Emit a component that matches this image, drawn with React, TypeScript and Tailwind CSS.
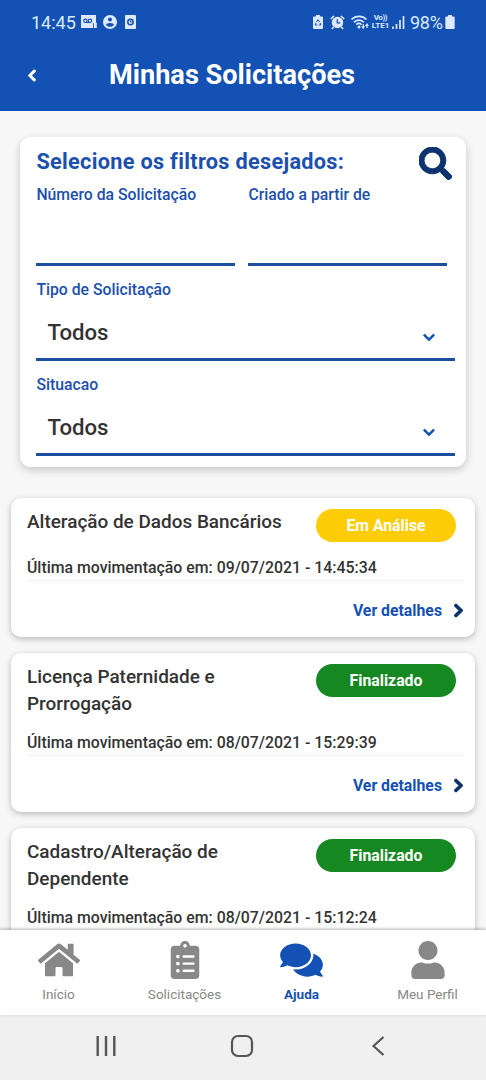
import {
  FaChevronDown,
  FaChevronLeft,
  FaChevronRight,
  FaClipboardList,
  FaComments,
  FaHome,
  FaSearch,
  FaUser,
} from 'react-icons/fa'
import clsx from 'clsx'

const requests = [
  {
    title: 'Alteração de Dados Bancários',
    status: 'Em Análise',
    updatedAt: '09/07/2021 - 14:45:34',
  },
  {
    title: 'Licença Paternidade e Prorrogação',
    status: 'Finalizado',
    updatedAt: '08/07/2021 - 15:29:39',
  },
  {
    title: 'Cadastro/Alteração de Dependente',
    status: 'Finalizado',
    updatedAt: '08/07/2021 - 15:12:24',
  },
]

function StatusBar() {
  return (
    <div className="flex h-[44px] items-center pr-[31px] pl-[31px] text-[#dce9ff]">
      <span className="w-[50px] text-[18px] whitespace-nowrap">14:45</span>
      {/* Voicemail */}
      <svg className="h-4 w-4" viewBox="0 0 16 16">
        <path d="M0 1h15v8h-3v5H0z" fill="currentColor" />
        <g fill="none" stroke="#1351b4" strokeWidth="1.1">
          <circle cx="4.4" cy="6.8" r="1.7" />
          <circle cx="9" cy="6.8" r="1.7" />
          <path d="M4.4 8.5H9" />
        </g>
        <rect x="12.8" y="8.6" width="3" height="5.4" fill="currentColor" />
      </svg>
      {/* Account */}
      <svg className="ml-[6px] h-[14px] w-[14px]" viewBox="0 0 14 14">
        <circle cx="7" cy="7" r="7" fill="currentColor" />
        <circle cx="7" cy="4.5" r="2" fill="#1351b4" />
        <path d="M3 10c0-2.8 8-2.8 8 0-2 2.4-6 2.4-8 0z" fill="#1351b4" />
      </svg>
      <svg className="ml-[8px] h-[14px] w-[11px]" viewBox="0 0 11 14">
        <rect width="11" height="14" rx="0.8" fill="currentColor" />
        <circle cx="5.5" cy="7" r="2.7" fill="none" stroke="#1351b4" strokeWidth="1.5" />
        <path d="M5.5 5.5V7H7" fill="none" stroke="#1351b4" />
      </svg>

      {/* Battery saver */}
      <svg className="ml-auto h-[14px] w-[10px]" viewBox="0 0 10 14">
        <path
          d="M3 0h4v1.5h2a1 1 0 0 1 1 1V13a1 1 0 0 1-1 1H1a1 1 0 0 1-1-1V2.5a1 1 0 0 1 1-1h2z"
          fill="currentColor"
        />
        <path
          d="M3.5 7 5 4.7 6.5 7M7 7.8l.8 2.2H5.8M4.3 10H2.2L3 7.8"
          fill="none"
          stroke="#1351b4"
        />
      </svg>
      {/* Alarm */}
      <svg className="ml-[7px] h-[15px] w-[15px]" viewBox="0 0 15 15">
        <circle cx="7.5" cy="7.5" r="5.7" fill="currentColor" />
        <path
          d="M.8 4 4 1M14.2 4 11 1M3.5 12 2 14M11.5 12l1.5 2"
          stroke="currentColor"
          strokeWidth="1.7"
        />
        <path d="M7.3 4.2v3.6h3" fill="none" stroke="#1351b4" strokeWidth="1.3" />
      </svg>
      {/* Wifi with traffic arrows */}
      <svg className="ml-[6px] h-[15px] w-[18px]" viewBox="0 0 18 15">
        <path
          d="M.5 4.5c4-4.3 11-4.3 15 0M3 7.3c3-3 7.3-3 10 0M5.3 9.7c1.6-1.5 3.6-1.5 5.2 0"
          fill="none"
          stroke="currentColor"
          strokeWidth="1.7"
        />
        <circle cx="8" cy="12" r="1.5" fill="currentColor" />
        <path
          d="M10.2 11.2h4l-2 3zM14 11l2-3 2 3zM11.6 9h1.2v3h-1.2zM15.4 10h1.2v3h-1.2z"
          fill="currentColor"
        />
      </svg>
      <div className="ml-[2px] flex w-[19px] flex-col items-center text-[8px] leading-[8px] font-bold whitespace-nowrap">
        <span className="tracking-[-0.4px]">Vo))</span>
        <span>LTE1</span>
      </div>
      <svg className="ml-[2px] h-[14px] w-[13px]" viewBox="0 0 13 14">
        <path
          d="M1 14v-2.5M4.5 14V9M8 14V5M11.5 14V1"
          stroke="currentColor"
          strokeWidth="1.7"
        />
      </svg>
      <span className="ml-[5px] w-[34px] text-[18px] tracking-[-0.3px] whitespace-nowrap">
        98%
      </span>
      <svg className="ml-px h-[14px] w-[10px]" viewBox="0 0 10 15">
        <path
          d="M3 0h4v1.5h2a1 1 0 0 1 1 1V14a1 1 0 0 1-1 1H1a1 1 0 0 1-1-1V2.5a1 1 0 0 1 1-1h2z"
          fill="currentColor"
        />
      </svg>
    </div>
  )
}

function TextField({ label }: { label: string }) {
  return (
    <div className="h-[81px] w-[199px] border-b-[3px] border-[#1c4f9f]">
      <div className="text-[15.75px] leading-5 font-medium text-[#1c50ad]">{label}</div>
    </div>
  )
}

function SelectField({ label, value }: { label: string; value: string }) {
  return (
    <div className="mt-[14px] h-[81px] border-b-[3px] border-[#1c4f9f]">
      <div className="text-[15.75px] leading-5 font-medium text-[#1c50ad]">{label}</div>
      <div className="mt-[18px] flex h-[30px] items-center justify-between pr-[19px] pl-[11px]">
        <span className="text-[22.2px] font-medium text-[#333]">{value}</span>
        <FaChevronDown strokeWidth={24} className="mt-[9px] h-[13px] w-[14px] text-[#1351b4]" />
      </div>
    </div>
  )
}

function RequestCard({ title, status, updatedAt }: (typeof requests)[number]) {
  const done = status === 'Finalizado'

  return (
    <div className="shrink-0 rounded-[10px] bg-white pt-[10px] pr-[11px] pl-4 shadow-[0_2px_6px_rgba(0,0,0,0.25)]">
      <div className="flex items-start justify-between pr-[8px]">
        <div className="w-[260px] text-[18.95px] leading-[27px] font-medium text-[#333]">
          <div className={clsx(done && 'w-[220px]')}>{title}</div>
        </div>
        <div
          className={clsx(
            'mt-px flex h-[33px] w-[140px] items-center justify-center rounded-full text-[15.8px] font-bold text-white',
            done ? 'bg-[#168821]' : 'bg-[#ffcd07]',
          )}
        >
          {status}
        </div>
      </div>
      <div className="mt-[16px] border-b border-dotted border-[#e8e8e8] pb-[2px] text-[15.85px] leading-5 font-medium whitespace-nowrap text-[#333]">
        Última movimentação em: {updatedAt}
      </div>
      <div className="flex h-[56px] items-center justify-end pt-[3px] text-[15.8px] font-bold text-[#1351b4]">
        Ver detalhes
        <FaChevronRight strokeWidth={40} className="ml-[11px] h-[15px] w-[11px] text-[#0c326f]" />
      </div>
    </div>
  )
}

const tabs = [
  { label: 'Início', icon: FaHome, size: 'w-[42px] h-[38px]', width: 'w-[117px]' },
  { label: 'Solicitações', icon: FaClipboardList, size: 'w-[38px] h-[38px]', width: 'w-[135px]' },
  { label: 'Ajuda', icon: FaComments, size: 'w-[43px] h-[38px]', width: 'w-[99px]', active: true },
  { label: 'Meu Perfil', icon: FaUser, size: 'w-[38px] h-[38px]', width: 'ml-[18px] w-[117px]' },
]

function TabBar() {
  return (
    <nav className="relative flex h-[85px] shrink-0 bg-white shadow-[0_-1px_3px_rgba(0,0,0,0.3)]">
      {tabs.map(({ label, icon: Icon, size, width, active }) => (
        <div
          key={label}
          className={clsx(
            'flex shrink-0 flex-col items-center pt-[11px] text-[13.5px]',
            width,
            active ? 'font-bold text-[#1351b4]' : 'text-[#888]',
          )}
        >
          <Icon className={size} />
          <span className="mt-[5px] leading-5 whitespace-nowrap">{label}</span>
        </div>
      ))}
    </nav>
  )
}

function SystemBar() {
  return (
    <div className="flex h-[65px] shrink-0 items-center bg-[#f0f0f0] pb-[3px] pl-[95px] text-[#555]">
      <svg
        className="h-[22px] w-[22px]"
        viewBox="0 0 22 22"
        fill="none"
        stroke="currentColor"
        strokeWidth="2.4"
      >
        <path d="M2.7 1v20M11 1v20M19.3 1v20" />
      </svg>
      <svg
        className="ml-[113px] h-[24px] w-[24px]"
        viewBox="0 0 24 24"
        fill="none"
        stroke="currentColor"
        strokeWidth="2.2"
      >
        <rect x="2" y="2" width="20" height="20" rx="6" />
      </svg>
      <svg
        className="ml-[117px] h-[22px] w-[14px]"
        viewBox="0 0 14 22"
        fill="none"
        stroke="currentColor"
        strokeWidth="2.2"
      >
        <path d="M12.5 2 2.5 11l10 9" />
      </svg>
    </div>
  )
}

export default function App() {
  return (
    <div className="flex h-[1080px] w-[486px] flex-col overflow-hidden bg-[#f7f7f7] font-['Roboto',sans-serif]">
      <header className="h-[111px] shrink-0 bg-[#1351b4]">
        <StatusBar />
        <div className="flex h-[62px] items-center pl-[26px] text-white">
          <FaChevronLeft strokeWidth={40} className="h-[13px] w-[12px]" />
          <h1 className="ml-[71px] pt-px text-[27.15px] font-bold whitespace-nowrap">
            Minhas Solicitações
          </h1>
        </div>
      </header>

      <main className="flex min-h-0 flex-1 flex-col overflow-hidden px-[11px] pt-[26px]">
        <section className="mx-[9px] h-[330px] shrink-0 rounded-[11px] bg-white pt-[10px] pr-[11px] pl-[16.4px] shadow-[0_3px_8px_rgba(0,0,0,0.2)]">
          <div className="flex h-[38px] justify-between pr-[3px]">
            <h2 className="text-[21.7px] leading-[29px] font-bold tracking-[0.3px] whitespace-nowrap text-[#1c50ad]">
              Selecione os filtros desejados:
            </h2>
            <FaSearch strokeWidth={14} className="h-[33px] w-[33px] text-[#0c326f]" />
          </div>
          <div className="flex gap-[13px]">
            <TextField label="Número da Solicitação" />
            <TextField label="Criado a partir de" />
          </div>
          <SelectField label="Tipo de Solicitação" value="Todos" />
          <SelectField label="Situacao" value="Todos" />
        </section>

        <div className="mt-[31px] flex flex-col gap-4">
          {requests.map((request) => (
            <RequestCard key={request.title} {...request} />
          ))}
        </div>
      </main>

      <TabBar />
      <SystemBar />
    </div>
  )
}
